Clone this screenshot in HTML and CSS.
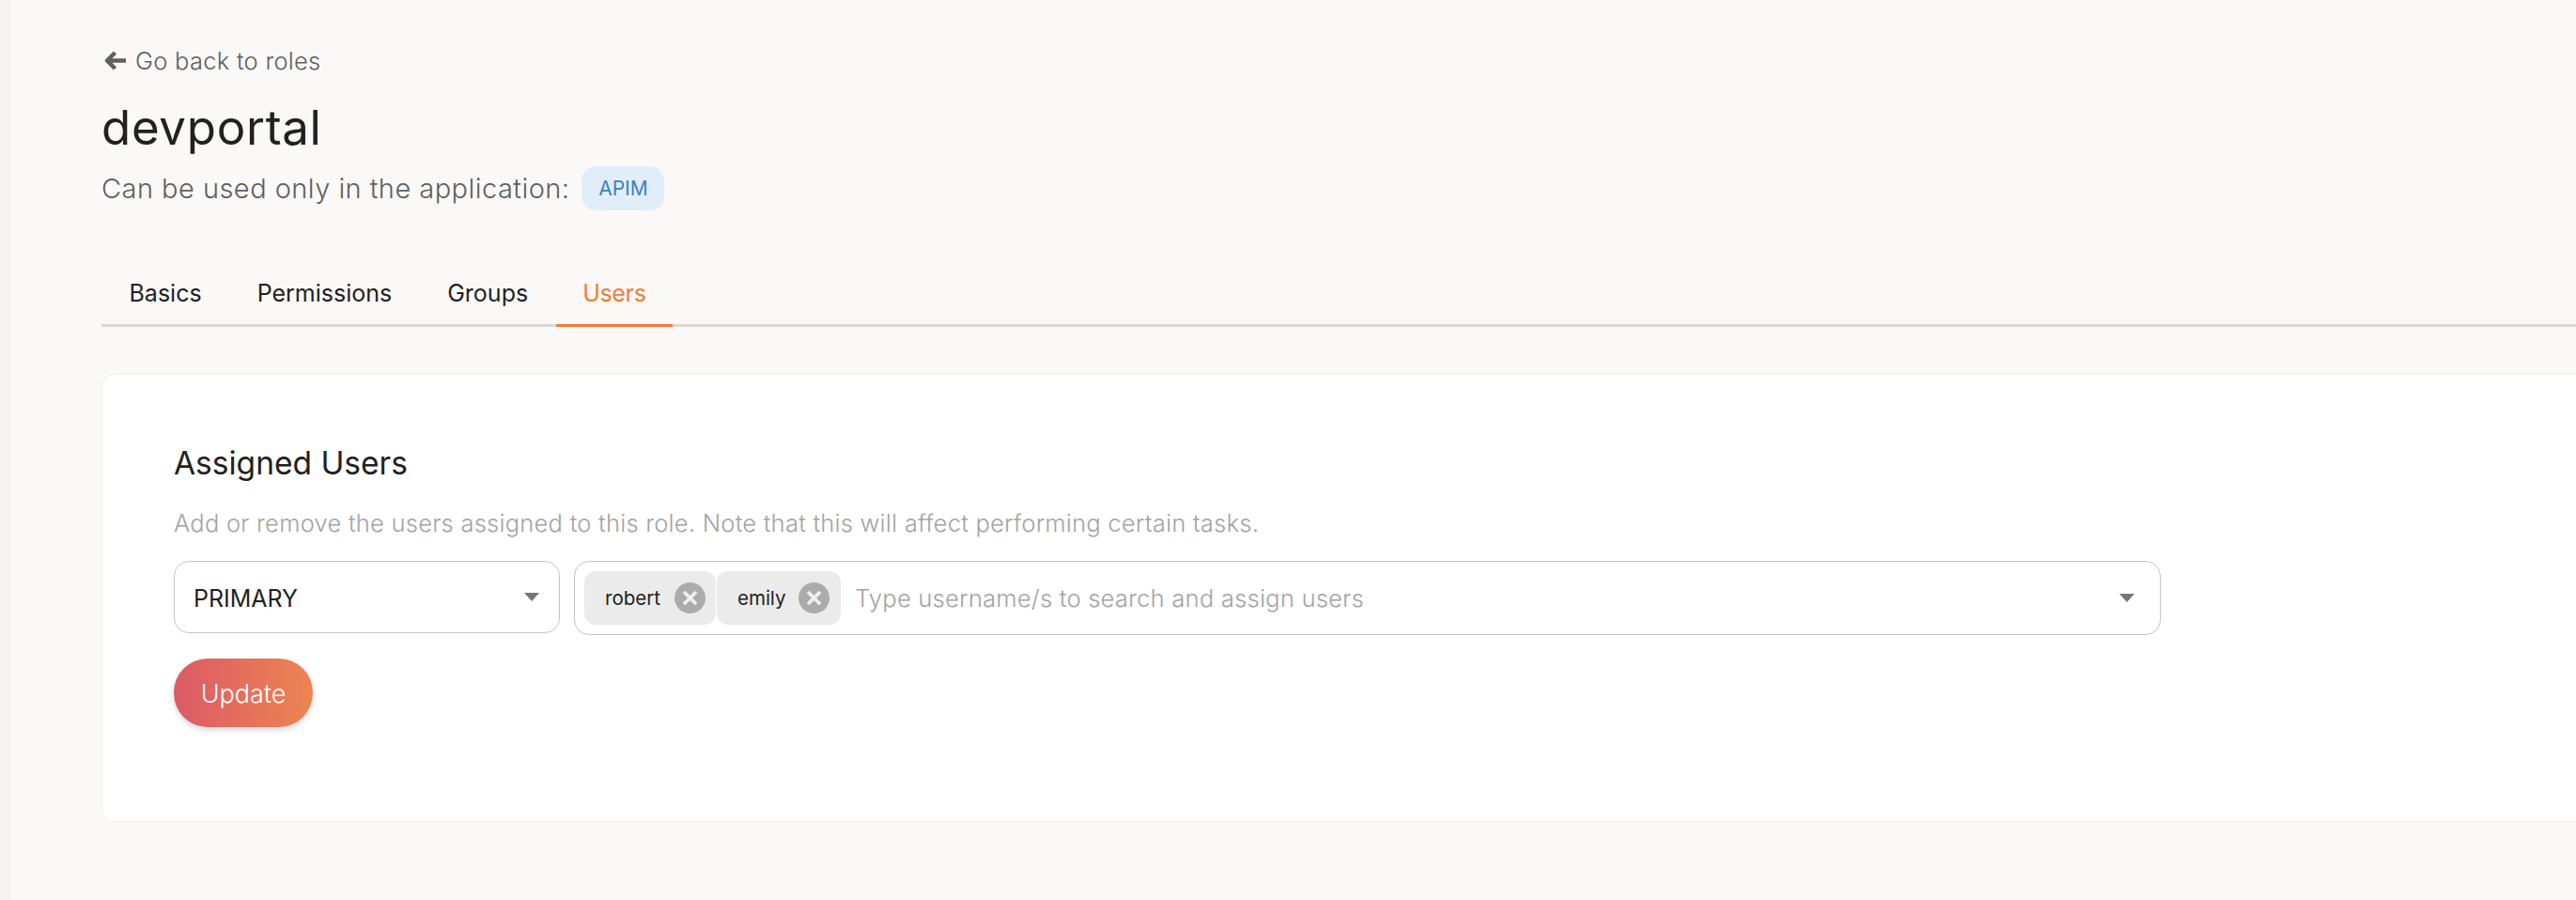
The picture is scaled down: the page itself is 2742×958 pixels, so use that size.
FILE: index.html
```html
<!DOCTYPE html>
<html lang="en">
<head>
  <meta charset="UTF-8" />
  <title>devportal - Roles</title>
  <link rel="stylesheet" href="styles.css">
</head>
<body>
  <div class="rail"></div>
  <main class="content">
    <a class="back-link" href="#">
      <svg class="back-icon" viewBox="0 0 24 21" aria-hidden="true">
        <path d="M11.500 2 3 10.500l8.500 8.500M3.500 10.500H23" fill="none" stroke="currentColor" stroke-width="4.500" stroke-linejoin="round" />
      </svg>
      <span>Go back to roles</span>
    </a>
    <h1 class="role-name">devportal</h1>
    <div class="role-scope">
      <span>Can be used only in the application:</span>
      <span class="app-chip">APIM</span>
    </div>

    <nav class="tabs">
      <a class="tab" href="#">Basics</a>
      <a class="tab" href="#">Permissions</a>
      <a class="tab" href="#">Groups</a>
      <a class="tab active" href="#">Users</a>
    </nav>

    <section class="card">
      <h2 class="card-title">Assigned Users</h2>
      <p class="card-desc">Add or remove the users assigned to this role. Note that this will affect performing certain tasks.</p>

      <div class="form-row">
        <div class="field domain-select">
          <span>PRIMARY</span>
          <span class="caret"></span>
        </div>
        <div class="field user-select">
          <span class="user-chip">robert
            <svg class="chip-remove" viewBox="0 0 33 33" aria-hidden="true">
              <circle cx="16.500" cy="16.500" r="16.500" fill="#ababab" />
              <path d="M10 10l13 13M23 10l-13 13" stroke="#f0f0f0" stroke-width="3.800" />
            </svg>
          </span>
          <span class="user-chip">emily
            <svg class="chip-remove" viewBox="0 0 33 33" aria-hidden="true">
              <circle cx="16.500" cy="16.500" r="16.500" fill="#ababab" />
              <path d="M10 10l13 13M23 10l-13 13" stroke="#f0f0f0" stroke-width="3.800" />
            </svg>
          </span>
          <span class="placeholder">Type username/s to search and assign users</span>
          <span class="caret"></span>
        </div>
      </div>

      <button class="update-btn">Update</button>
    </section>
  </main>
</body>
</html>
```

FILE: styles.css
```css
* {
  margin: 0;
  padding: 0;
  box-sizing: border-box;
}

html, body {
  height: 958px;
  overflow: hidden;
}

body {
  display: flex;
  font-family: "Inter", sans-serif;
  font-weight: 300;
  background: #faf9f7;
  color: #1f1f1f;
}

.rail {
  width: 11px;
  flex-shrink: 0;
  background: #f4f3f1;
}

.content {
  flex: 1;
  min-width: 0;
  padding: 50px 0 0 97px;
}

.back-link {
  display: flex;
  align-items: center;
  gap: 9px;
  height: 28px;
  font-size: 25.500px;
  letter-spacing: 0.270px;
  color: #5f5f5f;
  text-decoration: none;
}

.back-icon {
  width: 24px;
  height: 21px;
  margin-left: 3px;
}

.role-name {
  margin-top: 28px;
  font-size: 51px;
  letter-spacing: 0.700px;
  line-height: 60px;
  font-weight: 400;
  color: #212121;
}

.role-scope {
  display: flex;
  align-items: center;
  gap: 13px;
  margin-top: 11px;
  font-size: 29px;
  letter-spacing: 0.460px;
  color: #5f5f5f;
}

.app-chip {
  display: flex;
  align-items: center;
  justify-content: center;
  width: 88px;
  height: 47px;
  border-radius: 15px;
  background: #e1eefa;
  color: #3b82c4;
  font-size: 21px;
  letter-spacing: 0;
  font-weight: 400;
}

.tabs {
  display: flex;
  height: 58px;
  margin-top: 66px;
  border-bottom: 3px solid #d9d7d3;
}

.tab {
  padding: 0 29.500px;
  height: 58px;
  line-height: 44px;
  font-size: 25px;
  font-weight: 400;
  color: #212121;
  text-decoration: none;
}

.tab.active {
  padding: 0 28.500px;
  letter-spacing: -0.300px;
  color: #f27d34;
  border-bottom: 3px solid #f27d34;
}

.card {
  height: 477px;
  margin: 50px -24px 0 0;
  padding: 74px 0 0 76px;
  background: #fff;
  border: 1px solid #efeeec;
  border-radius: 14px;
}

.card-title {
  font-size: 33.500px;
  line-height: 40px;
  font-weight: 400;
  color: #212121;
}

.card-desc {
  margin-top: 28px;
  font-size: 25.500px;
  letter-spacing: 0.250px;
  line-height: 32px;
  color: #a3a3a3;
}

.form-row {
  display: flex;
  align-items: flex-start;
  gap: 15px;
  margin-top: 24px;
}

.field {
  display: flex;
  align-items: center;
  background: #fff;
  border: 1px solid #c4c4c4;
  border-radius: 16px;
}

.domain-select {
  justify-content: space-between;
  width: 411px;
  height: 77px;
  padding: 2px 21px 0 20px;
  font-size: 25px;
  font-weight: 400;
}

.domain-select .caret {
  margin-top: -2px;
}

.user-select {
  width: 1689px;
  height: 79px;
  padding: 0 27px 0 10px;
}

.caret {
  width: 0;
  height: 0;
  border-left: 8px solid transparent;
  border-right: 8px solid transparent;
  border-top: 9px solid #757575;
}

.user-chip {
  display: flex;
  align-items: center;
  justify-content: space-between;
  height: 57px;
  padding: 0 12px 0 22px;
  margin-right: 1px;
  border-radius: 12px;
  background: #ebebeb;
  font-size: 20.500px;
  font-weight: 400;
  color: #212121;
}

.user-chip:nth-child(1) {
  width: 140px;
  padding-right: 11px;
}

.user-chip:nth-child(2) {
  width: 132px;
}

.chip-remove {
  width: 33px;
  height: 33px;
}

.placeholder {
  flex: 1;
  margin-left: 14px;
  font-size: 25.500px;
  letter-spacing: 0.250px;
  color: #a3a3a3;
}

.update-btn {
  display: block;
  width: 148px;
  height: 73px;
  margin-top: 25px;
  padding-top: 2px;
  border: none;
  border-radius: 36px;
  background: linear-gradient(to right, #dc5a67, #ec8550);
  box-shadow: 0 3px 6px rgba(0, 0, 0, 0.16);
  color: #fff;
  font-family: inherit;
  font-size: 27px;
  font-weight: 300;
}
```
